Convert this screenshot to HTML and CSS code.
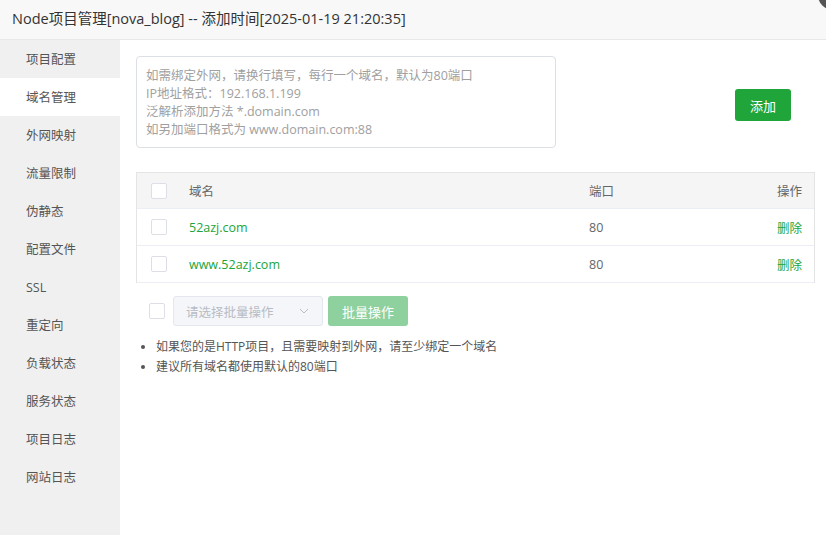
FILE: index.html
```html
<!DOCTYPE html>
<html lang="zh-CN">
<head>
<meta charset="utf-8">
<title>Node项目管理</title>
<link rel="stylesheet" href="styles.css">
</head>
<body>
<div class="dialog">
  <div class="header">Node项目管理[nova_blog] -- 添加时间[2025-01-19 21:20:35]</div>
  <span class="close-btn"></span>
  <div class="body">
    <ul class="side">
      <li>项目配置</li>
      <li class="active">域名管理</li>
      <li>外网映射</li>
      <li>流量限制</li>
      <li>伪静态</li>
      <li>配置文件</li>
      <li>SSL</li>
      <li>重定向</li>
      <li>负载状态</li>
      <li>服务状态</li>
      <li>项目日志</li>
      <li>网站日志</li>
    </ul>
    <div class="main">
      <div class="add-row">
        <div class="textarea">
          <div>如需绑定外网，请换行填写，每行一个域名，默认为80端口</div>
          <div>IP地址格式：192.168.1.199</div>
          <div>泛解析添加方法 *.domain.com</div>
          <div>如另加端口格式为 www.domain.com:88</div>
        </div>
        <button class="btn-add">添加</button>
      </div>
      <div class="table">
        <div class="tr th">
          <span class="cell-check"><span class="checkbox"></span></span>
          <span class="cell-name">域名</span>
          <span class="cell-port">端口</span>
          <span class="cell-op">操作</span>
        </div>
        <div class="tr">
          <span class="cell-check"><span class="checkbox"></span></span>
          <span class="cell-name link">52azj.com</span>
          <span class="cell-port">80</span>
          <span class="cell-op link">删除</span>
        </div>
        <div class="tr">
          <span class="cell-check"><span class="checkbox"></span></span>
          <span class="cell-name link">www.52azj.com</span>
          <span class="cell-port">80</span>
          <span class="cell-op link">删除</span>
        </div>
      </div>
      <div class="batch">
        <span class="checkbox"></span>
        <div class="select">
          <span>请选择批量操作</span>
          <svg width="10" height="6" viewBox="0 0 10 6"><path d="M1 1 L5 5 L9 1" fill="none" stroke="#b8bcc4" stroke-width="1"/></svg>
        </div>
        <button class="btn-batch">批量操作</button>
      </div>
      <ul class="tips">
        <li>如果您的是HTTP项目，且需要映射到外网，请至少绑定一个域名</li>
        <li>建议所有域名都使用默认的80端口</li>
      </ul>
    </div>
  </div>
</div>
</body>
</html>
```
FILE: styles.css
```css
* { box-sizing: border-box; }
html, body { margin: 0; padding: 0; }
body {
  width: 826px;
  height: 535px;
  overflow: hidden;
  background: #fff;
  font-family: "Open Sans", "Noto Sans CJK SC", sans-serif;
  color: #555;
}
.dialog {
  position: relative;
  width: 826px;
  height: 535px;
  display: flex;
  flex-direction: column;
}
.header {
  height: 40px;
  line-height: 38px;
  padding-left: 12px;
  font-size: 14.5px;
  color: #333;
  background: #f8f8f8;
  border-bottom: 1px solid #e8e8e8;
  white-space: nowrap;
}
.close-btn {
  position: absolute;
  right: -22px;
  top: -20px;
  width: 30px;
  height: 30px;
  border-radius: 50%;
  background: #555;
}
.body {
  flex: 1;
  display: flex;
}
.side {
  list-style: none;
  margin: 0;
  padding: 0;
  width: 120px;
  flex-shrink: 0;
  background: #f0f0f0;
}
.side li {
  height: 38px;
  line-height: 38px;
  padding-top: 1px;
  padding-left: 26px;
  font-size: 12.5px;
  color: #555;
}
.side li.active { background: #fff; }
.main {
  flex: 1;
  padding: 16px 12px 0 16px;
}
.add-row {
  display: flex;
  align-items: center;
}
.textarea {
  width: 420px;
  height: 92px;
  border: 1px solid #dcdfe6;
  border-radius: 4px;
  padding: 10px 9px 0;
  font-size: 12.5px;
  line-height: 18px;
  color: #a0a0a0;
}
.btn-add {
  margin-left: 179px;
  margin-top: 6px;
  width: 56px;
  height: 32px;
  border: none;
  border-radius: 3px;
  background: #20a53a;
  color: #fff;
  font-family: inherit;
  font-size: 13px;
  padding: 0;
}
.table {
  margin-top: 24px;
  width: 679px;
  border: 1px solid #e4e4e4;
  border-bottom: none;
}
.tr {
  display: flex;
  align-items: center;
  height: 37px;
  border-bottom: 1px solid #ebeef5;
  font-size: 12.5px;
  color: #666;
}
.tr.th {
  height: 36px;
  background: #f5f5f5;
  color: #666;
}
.cell-check {
  width: 52px;
  padding-left: 14px;
  display: flex;
  align-items: center;
}
.checkbox {
  display: inline-block;
  width: 16px;
  height: 16px;
  border: 1px solid #dcdfe6;
  border-radius: 2px;
  background: #fff;
}
.cell-name { width: 400px; }
.cell-port { flex: 1; }
.cell-op { padding-right: 12px; }
.link { color: #20a53a; }
.batch {
  display: flex;
  align-items: center;
  margin-top: 13px;
  padding-left: 13px;
  height: 30px;
}
.select {
  margin-left: 8px;
  width: 150px;
  height: 30px;
  border: 1px solid #e4e7ed;
  border-radius: 3px;
  background: #f5f6fa;
  display: flex;
  align-items: center;
  justify-content: space-between;
  padding: 0 13px 0 12px;
  font-size: 12.5px;
  color: #b8bcc4;
}
.btn-batch {
  margin-left: 5px;
  width: 80px;
  height: 30px;
  border: none;
  border-radius: 3px;
  background: #8fd19e;
  color: #fff;
  font-family: inherit;
  font-size: 13px;
  padding: 0;
}
.tips {
  margin: 11px 0 0 0;
  padding-left: 20px;
  font-size: 12px;
  line-height: 20px;
  color: #555;
}
```
